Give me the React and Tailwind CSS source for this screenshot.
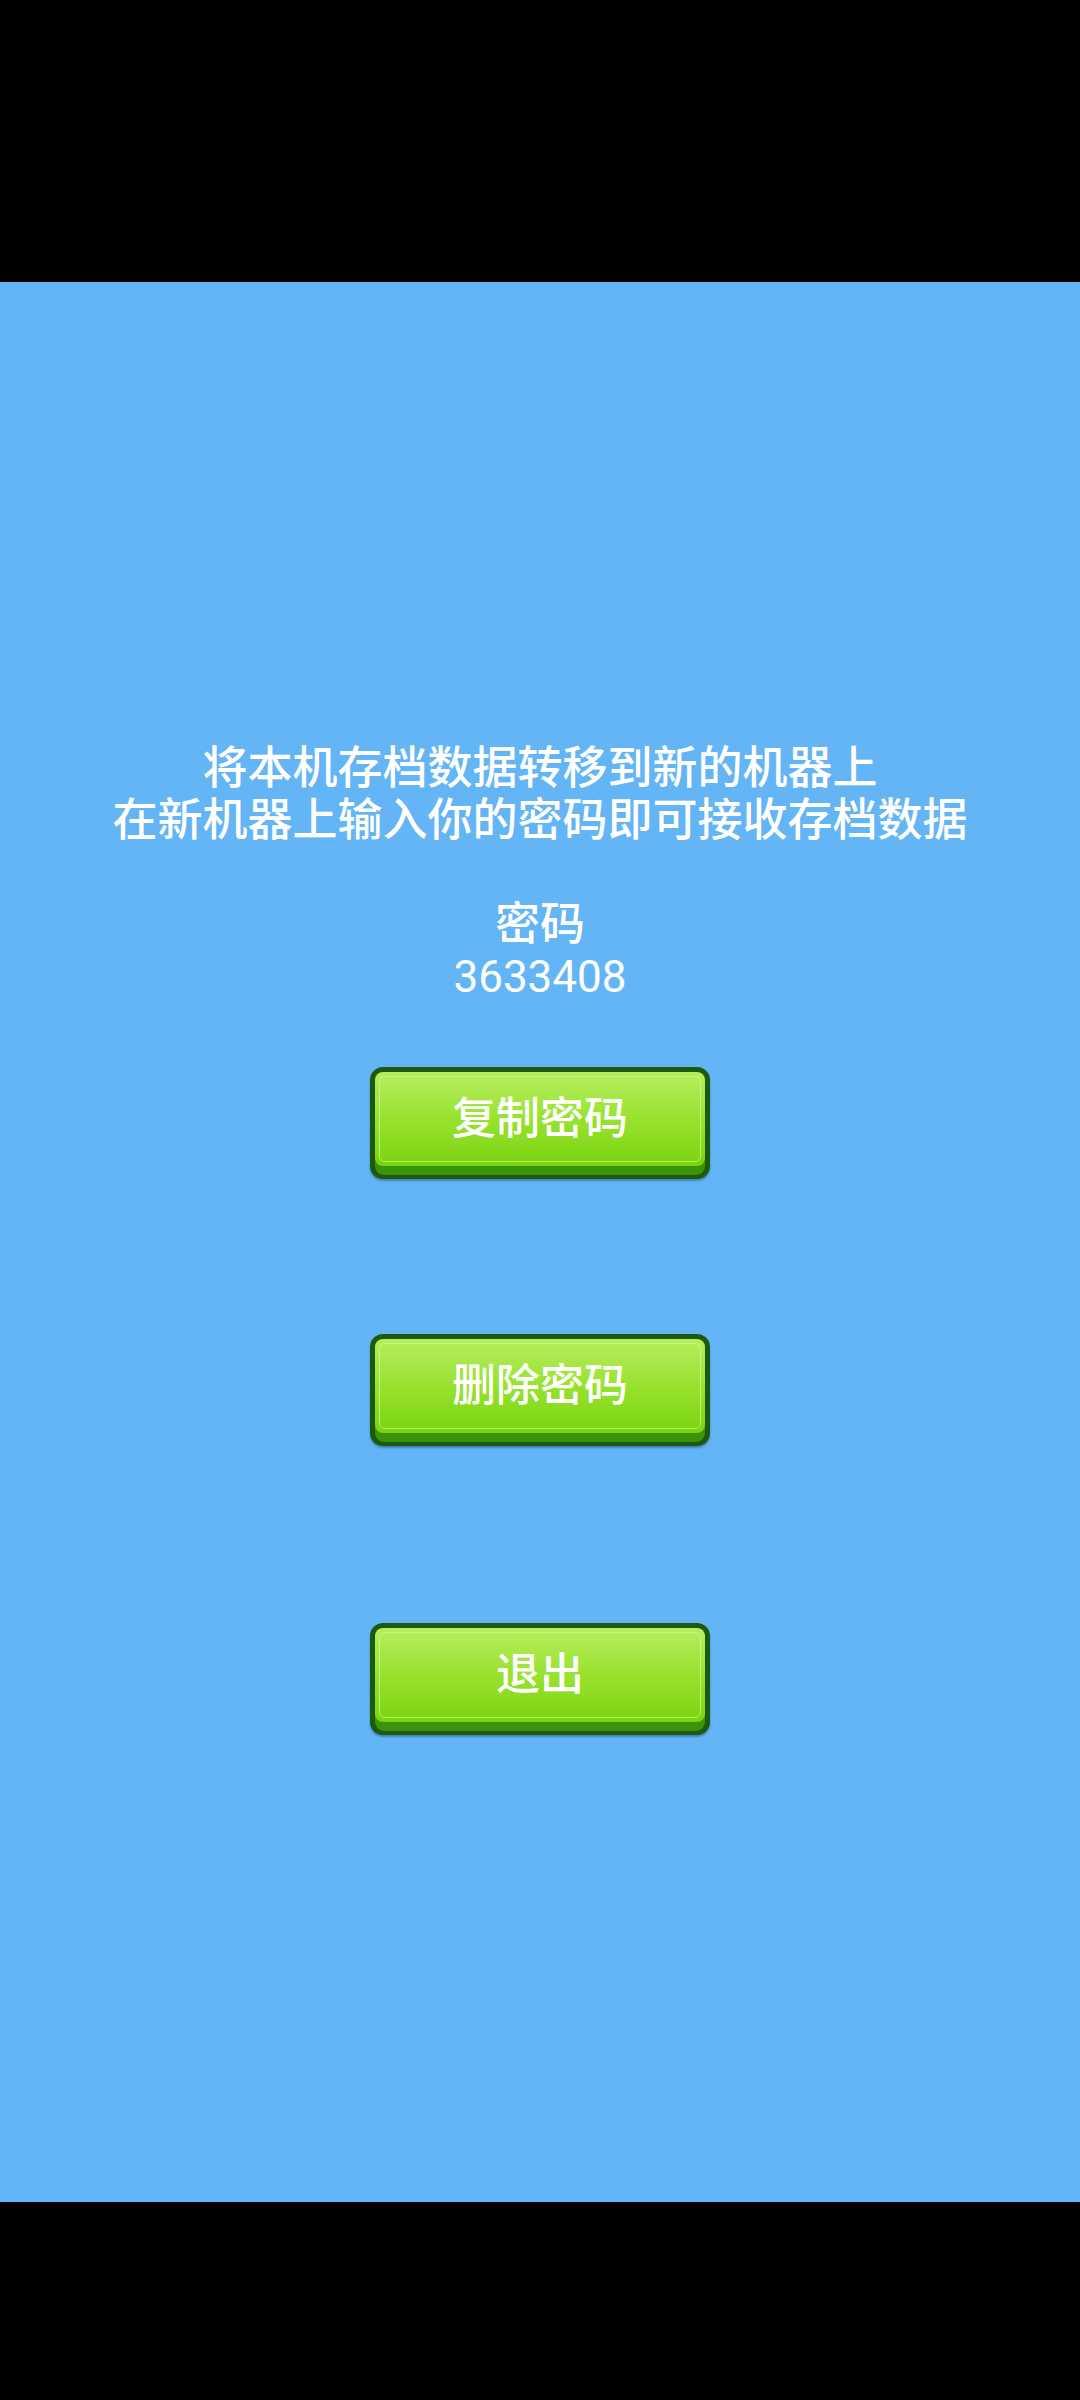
import React from "react";

const font = { fontFamily: "Roboto, 'Noto Sans CJK SC', sans-serif" };

function GameButton({ label, className = "" }) {
  return (
    <div className={`w-[340px] h-[112px] rounded-[13px] bg-[#1e5a0d] p-[5px] pb-[4px] shadow-[0_2px_2px_rgba(0,40,80,0.35)] ${className}`}>
      <div className="h-full rounded-[9px] bg-[#3b930c] pb-[9px] flex flex-col">
        <div className="flex-1 rounded-[8px] bg-gradient-to-b from-[#b6ee5c] via-[#98e22e] to-[#7ad40a] p-[4px] flex">
          <div className="flex-1 rounded-[6px] border border-[#d2f79a]/70 flex items-center justify-center">
            <span className="text-white text-[44px] leading-none font-medium" style={font}>
              {label}
            </span>
          </div>
        </div>
      </div>
    </div>
  );
}

export default function App() {
  return (
    <div className="w-[1080px] h-[2400px] bg-black flex flex-col" style={font}>
      <div className="h-[282px] bg-black shrink-0" />
      <div className="h-[1920px] bg-[#64b5f6] shrink-0 flex flex-col items-center">
        <div className="mt-[461px] flex flex-col items-center text-white text-[45px] leading-[52px] text-center font-medium">
          <div>将本机存档数据转移到新的机器上</div>
          <div>在新机器上输入你的密码即可接收存档数据</div>
          <div className="h-[52px]" />
          <div>密码</div>
          <div className="text-[44px] font-normal">3633408</div>
        </div>
        <GameButton label="复制密码" className="mt-[64px]" />
        <GameButton label="删除密码" className="mt-[155px]" />
        <GameButton label="退出" className="mt-[177px]" />
      </div>
      <div className="flex-1 bg-black" />
    </div>
  );
}
